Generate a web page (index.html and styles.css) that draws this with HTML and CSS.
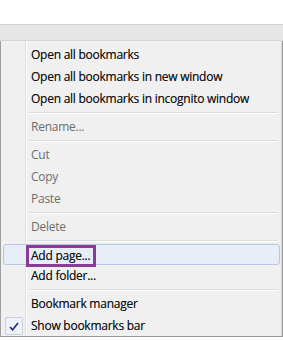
FILE: index.html
```html
<!DOCTYPE html>
<html lang="en">
<head>
    <meta charset="UTF-8">
    <meta name="viewport" content="width=device-width, initial-scale=1.0">
    <title>Bookmarks menu</title>
    <link rel="stylesheet" href="styles.css">
</head>
<body>
    <div class="toolbar"></div>

    <div class="menu">
        <div class="item">Open all bookmarks</div>
        <div class="item">Open all bookmarks in new window</div>
        <div class="item">Open all bookmarks in incognito window</div>
        <div class="sep"></div>
        <div class="item disabled">Rename...</div>
        <div class="sep"></div>
        <div class="item disabled">Cut</div>
        <div class="item disabled">Copy</div>
        <div class="item disabled">Paste</div>
        <div class="sep"></div>
        <div class="item disabled">Delete</div>
        <div class="sep"></div>
        <div class="item hover"><span class="callout">Add page...</span></div>
        <div class="item">Add folder...</div>
        <div class="sep"></div>
        <div class="item">Bookmark manager</div>
        <div class="item checked">
            <span class="check">
                <svg width="10" height="9" viewBox="0 0 10 9">
                    <path d="M1 5 L3.6 7.8 L9 1" fill="none" stroke="#1c2a86" stroke-width="1.6"/>
                </svg>
            </span>
            Show bookmarks bar
        </div>
    </div>
</body>
</html>
```

FILE: styles.css
```css
* {
    margin: 0;
    padding: 0;
    box-sizing: border-box;
}

body {
    font-family: "Open Sans", "Noto Sans", sans-serif;
    font-size: 12px;
    background: #ffffff;
    color: #111111;
    width: 283px;
    height: 340px;
    overflow: hidden;
    padding-top: 24px;
}

.toolbar {
    height: 17px;
    background: #e6e6e6;
    border-top: 1px solid #d0d0d0;
    border-bottom: 1px solid #d6d6d6;
}

.menu {
    width: 283px;
    height: 296px;
    background: #f0f0f0;
    border: 1px solid #979797;
    border-top: none;
    border-left-color: #a0a0a0;
    padding: 3px 2px 0 2px;
    box-shadow: inset -1px 0 0 #d8d8d8;
    position: relative;
}

.menu::before {
    content: "";
    position: absolute;
    left: 24px;
    top: 0;
    bottom: 0;
    width: 1px;
    background: #e0e0e0;
    box-shadow: 1px 0 0 #ffffff;
}

.item {
    height: 22px;
    line-height: 22px;
    padding-left: 28px;
    position: relative;
    white-space: nowrap;
    letter-spacing: -0.25px;
    text-shadow: 0 0 0.4px rgba(0, 0, 0, 0.5);
}

.disabled {
    color: #6e6e6e;
    text-shadow: none;
}

.sep {
    height: 6px;
    margin-left: 26px;
    position: relative;
}

.sep::after {
    content: "";
    position: absolute;
    left: 0;
    right: 2px;
    top: 2px;
    height: 1px;
    background: #dcdcdc;
    box-shadow: 0 1px 0 #ffffff;
}

.hover {
    background: #e8eef8;
    border: 1px solid #b4c8e6;
    border-radius: 3px;
    padding-left: 22px;
    line-height: 20px;
    height: 21px;
}

.callout {
    display: inline-block;
    border: 3px solid #8a3b96;
    line-height: 16px;
    padding: 0 3px 0 2px;
}

.check {
    position: absolute;
    left: 2px;
    top: 2px;
    width: 18px;
    height: 18px;
    border: 1px solid #c6d1e4;
    border-radius: 2px;
    background: #eef1f7;
    display: flex;
    align-items: center;
    justify-content: center;
}
```
